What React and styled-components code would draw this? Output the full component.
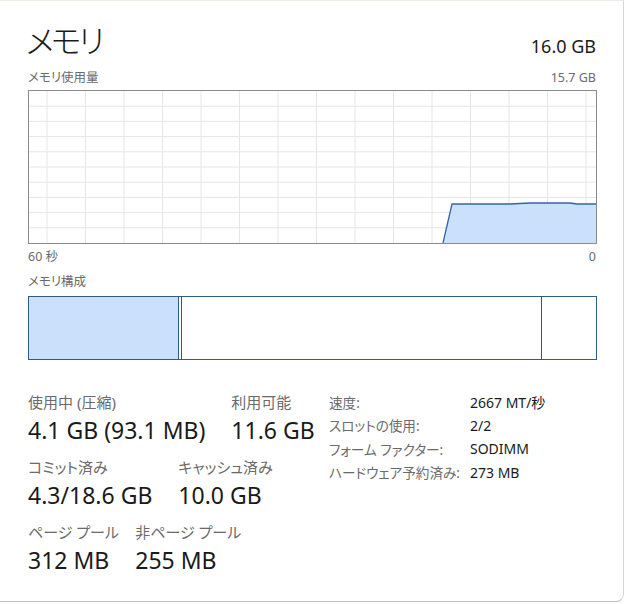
import React from "react";
import styled, {createGlobalStyle} from "styled-components";

const GlobalStyle = createGlobalStyle`
  body {
    margin: 0;
    background: #ffffff;
    font-family: "Noto Sans", "Noto Sans CJK JP", sans-serif;
    font-feature-settings: "palt" 1;
  }
`;

const Panel = styled.div`
  box-sizing: border-box;
  width: 624px;
  height: 602px;
  padding: 21px 27px 0 28px;
  background: #ffffff;
  border-top: 1px solid #ecebe5;
  border-right: 1px solid #d6d6d6;
  border-bottom: 1px solid #bdbdbd;
  border-bottom-right-radius: 8px;
  color: #1a1a1a;
`;

const Header = styled.div`
  display: flex;
  justify-content: space-between;
  align-items: baseline;
`;

const Title = styled.h1`
  margin: 0 0 0 -2px;
  font-family: "Noto Sans CJK JP", sans-serif;
  font-size: 32px;
  font-weight: 300;
  line-height: 35px;
  letter-spacing: -3px;
`;

const Total = styled.span`
  font-size: 18px;
  line-height: 24px;
`;

const CaptionRow = styled.div`
  display: flex;
  justify-content: space-between;
  margin-top: ${(p) => p.$gap}px;
  font-size: 12.5px;
  line-height: 16px;
  color: #6b6b6b;
`;

const Graph = styled.div`
  box-sizing: border-box;
  width: 569px;
  height: 154px;
  margin-top: 4px;
  border: 1px solid #8a8a8a;

  svg {
    display: block;
  }
`;

const Bar = styled.div`
  box-sizing: border-box;
  display: flex;
  width: 569px;
  height: 64px;
  margin-top: 6px;
  border: 1px solid #2f5b8c;
`;

const Segment = styled.div`
  flex: ${(p) => (p.$width ? `0 0 ${p.$width}px` : "1")};
  background: ${(p) => p.$fill || "#ffffff"};
  border-right: ${(p) => (p.$last ? "none" : "1px solid #2f5b8c")};
`;

const Lower = styled.div`
  display: flex;
  margin-top: 32px;
`;

const Stats = styled.div`
  display: flex;
  flex-direction: column;
  gap: 13px;
  width: 301px;
`;

const StatRow = styled.div`
  display: flex;
  gap: 26px;
`;

const Stat = styled.div`
  display: flex;
  flex-direction: column;
  gap: 4px;
`;

/* the label never widens its column: the value sets it */
const StatLabel = styled.span`
  width: 0;
  font-size: 15px;
  line-height: 20px;
  color: #6b6b6b;
  white-space: nowrap;
`;

const StatValue = styled.span`
  font-size: 23px;
  line-height: 28px;
  color: #1a1a1a;
  white-space: nowrap;
`;

const Details = styled.dl`
  display: grid;
  grid-template-columns: 141px auto;
  grid-auto-rows: 23.5px;
  align-items: center;
  margin: -2px 0 0;
  font-size: 14px;
`;

const DetailLabel = styled.dt`
  font-size: 13.6px;
  color: #6b6b6b;
  white-space: nowrap;
`;

const DetailValue = styled.dd`
  margin: 0;
  color: #1a1a1a;
  white-space: nowrap;
`;

const vLines = Array.from({length: 15}, (_, i) => 18 + i * 38.5);
const hLines = Array.from({length: 9}, (_, i) => (i + 1) * 15.2);
const usage = "414,152 423,113 481,113 501,112 541,112 548,113 567,113";

const UsageGraph = () => (
  <svg width="567" height="152" viewBox="0 0 567 152">
    {vLines.map((x) => (
      <line key={`v${x}`} x1={x} y1="0" x2={x} y2="152" stroke="#e6e6e6" strokeWidth="1" />
    ))}
    {hLines.map((y) => (
      <line key={`h${y}`} x1="0" y1={y} x2="567" y2={y} stroke="#e6e6e6" strokeWidth="1" />
    ))}
    <polygon points={`${usage} 567,152`} fill="#cbe0fb" />
    <polyline points={usage} fill="none" stroke="#3466a6" strokeWidth="1.3" />
  </svg>
);

const rows = [
  [
    ["使用中 (圧縮)", "4.1 GB (93.1 MB)"],
    ["利用可能", "11.6 GB"],
  ],
  [
    ["コミット済み", "4.3/18.6 GB"],
    ["キャッシュ済み", "10.0 GB"],
  ],
  [
    ["ページ プール", "312 MB"],
    ["非ページ プール", "255 MB"],
  ],
];

const details = [
  ["速度:", "2667 MT/秒"],
  ["スロットの使用:", "2/2"],
  ["フォーム ファクター:", "SODIMM"],
  ["ハードウェア予約済み:", "273 MB"],
];

export default function App() {
  return (
    <>
      <GlobalStyle />
      <Panel>
        <Header>
          <Title>メモリ</Title>
          <Total>16.0 GB</Total>
        </Header>
        <CaptionRow $gap={12}>
          <span>メモリ使用量</span>
          <span>15.7 GB</span>
        </CaptionRow>
        <Graph>
          <UsageGraph />
        </Graph>
        <CaptionRow $gap={5}>
          <span>60 秒</span>
          <span>0</span>
        </CaptionRow>
        <CaptionRow $gap={9}>
          <span>メモリ構成</span>
        </CaptionRow>
        <Bar>
          <Segment $width={149} $fill="#cbe0fb" />
          <Segment $width={2} />
          <Segment $width={359} />
          <Segment $last />
        </Bar>
        <Lower>
          <Stats>
            {rows.map((row, i) => (
              <StatRow key={i}>
                {row.map(([label, value]) => (
                  <Stat key={label}>
                    <StatLabel>{label}</StatLabel>
                    <StatValue>{value}</StatValue>
                  </Stat>
                ))}
              </StatRow>
            ))}
          </Stats>
          <Details>
            {details.map(([label, value]) => (
              <React.Fragment key={label}>
                <DetailLabel>{label}</DetailLabel>
                <DetailValue>{value}</DetailValue>
              </React.Fragment>
            ))}
          </Details>
        </Lower>
      </Panel>
    </>
  );
}
